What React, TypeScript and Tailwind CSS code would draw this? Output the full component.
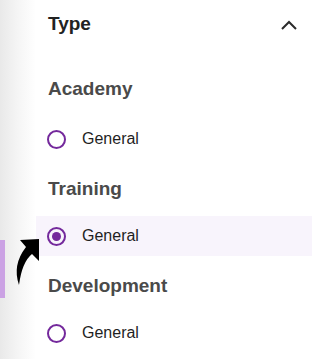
import { useState } from "react"

interface Group {
  title: string
  options: string[]
}

const groups: Group[] = [
  { title: "Academy", options: ["General"] },
  { title: "Training", options: ["General"] },
  { title: "Development", options: ["General"] },
]

function Radio({ checked }: { checked: boolean }) {
  return (
    <span className="w-[19px] h-[19px] rounded-full border-2 border-[#74299c] flex items-center justify-center shrink-0">
      {checked && <span className="w-[9px] h-[9px] rounded-full bg-[#74299c]" />}
    </span>
  )
}

export default function App() {
  const [selected, setSelected] = useState("Training-General")

  return (
    <div
      className="relative w-[314px] h-[359px] bg-white flex overflow-hidden"
      style={{ fontFamily: '"Liberation Sans", Arial, sans-serif' }}
    >
      {/* left shadow strip */}
      <div className="w-[36px] shrink-0 bg-gradient-to-r from-[#e9e9e9] via-[#f5f5f5] to-white">
        <div className="mt-[240px] h-[58px] w-[5px] bg-[#cba2e4]" />
      </div>

      <div className="flex-1 pr-[2px]">
        <div className="h-[47px] flex items-center justify-between pl-[12px] pr-[15px]">
          <span className="text-[19px] leading-[22px] font-bold text-[#222]">Type</span>
          <svg width="16" height="10" viewBox="0 0 16 10" className="mt-[3px]">
            <path d="M1 9 L8 2 L15 9" fill="none" stroke="#2b2b2b" strokeWidth="2" />
          </svg>
        </div>

        <div className="mt-[12px]">
          {groups.map((g, i) => (
            <div key={g.title}>
              <div
                className={`pt-[19px] pl-[12px] text-[19px] leading-[22px] font-bold text-[#4a4a4a] ${
                  i === 0 ? "pb-[19px]" : "pb-[16px]"
                }`}
              >
                {g.title}
              </div>
              {g.options.map((o) => {
                const id = `${g.title}-${o}`
                const checked = selected === id
                return (
                  <div
                    key={id}
                    onClick={() => setSelected(id)}
                    className={`h-[40px] flex items-center gap-[16px] pl-[11px] cursor-pointer ${
                      checked ? "bg-[#f8f4fc]" : ""
                    }`}
                  >
                    <Radio checked={checked} />
                    <span className="text-[16px] leading-[20px] text-[#1f1f1f]">{o}</span>
                  </div>
                )
              })}
            </div>
          ))}
        </div>
      </div>

      {/* cursor arrow annotation */}
      <svg
        className="absolute left-[12px] top-[234px]"
        width="30"
        height="54"
        viewBox="12 234 30 54"
      >
        <path d="M20 240 L39 239 L39 261 L32 254 Q22 262 19 285 Q12 265 26 247 Z" fill="#000" />
      </svg>
    </div>
  )
}
